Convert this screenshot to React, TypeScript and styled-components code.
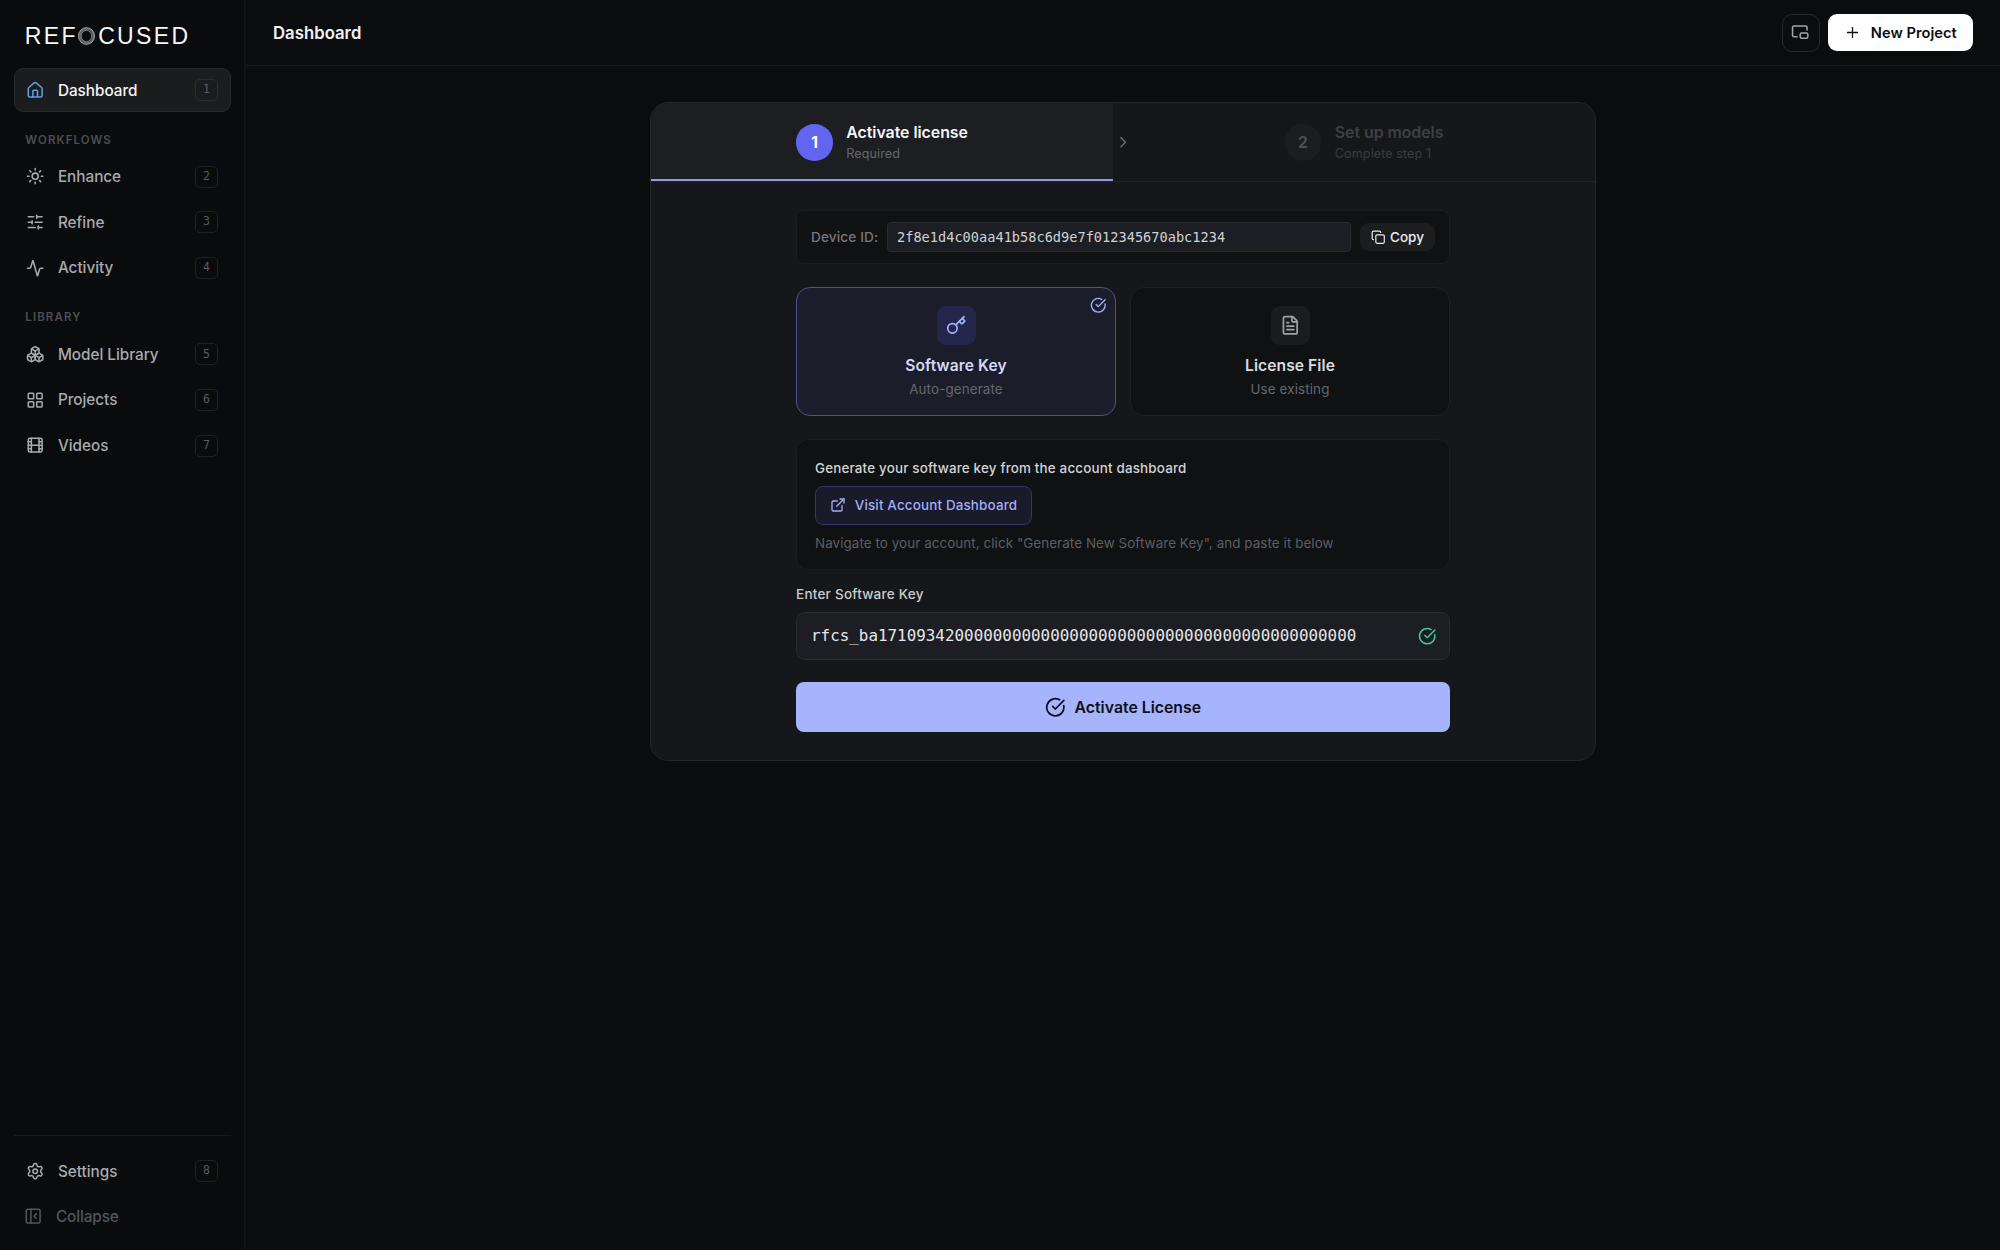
import React from "react";
import styled, { createGlobalStyle, css } from "styled-components";
import {
  House, Sun, SlidersHorizontal, Activity, Boxes, LayoutGrid, Film, Settings,
  PanelLeftClose, PictureInPicture2, Plus, ChevronRight, Copy, CircleCheckBig,
  Key, FileText, ExternalLink,
} from "lucide-react";

const Global = createGlobalStyle`
  *, *::before, *::after { box-sizing: border-box; }
  body { margin: 0; background: #0b0c0e; color: #fff; font-family: Inter, "Liberation Sans", sans-serif; -webkit-font-smoothing: antialiased; }
  button, input { font: inherit; color: inherit; letter-spacing: inherit; }
  svg { display: block; flex: none; }
`;

const Page = styled.div`
  display: flex;
  width: 100%;
  height: 1250px;
  overflow: hidden;
`;

/* Sidebar */
const Sidebar = styled.aside`
  display: flex;
  flex-direction: column;
  width: 246px;
  flex: none;
  padding: 0 13.5px 0 14px;
  background: #0a0b0d;
  border-right: 2px solid #131417;
`;
const Brand = styled.div`
  display: flex;
  align-items: center;
  height: 68px;
  padding: 3px 0 0 10.8px;
  font: 400 23px/24px "Liberation Sans", Arial, sans-serif;
  color: #f7f7f8;
`;
const BrandPart = styled.span`
  letter-spacing: 2.35px;
`;
const Ring = styled.svg`
  width: 17px;
  height: 18px;
  margin: 0 3px 0 0.3px;
`;
const KeyHint = styled.kbd<{ $active?: boolean }>`
  display: grid;
  place-items: center;
  width: 23px;
  height: 22px;
  padding-left: 1px;
  border: 1px solid ${(p) => (p.$active ? "#2b2c2f" : "#202124")};
  border-radius: 5px;
  color: #5a5b5f;
  font: 400 11.5px/1 "DejaVu Sans Mono", monospace;
`;
const NavItem = styled.a<{ $active?: boolean }>`
  display: flex;
  align-items: center;
  height: 44px;
  margin-bottom: 1.6px;
  padding: 0 12px 0 11px;
  border: 1px solid ${(p) => (p.$active ? "#28292c" : "transparent")};
  border-radius: 9px;
  background: ${(p) => (p.$active ? "#1b1c1e" : "transparent")};
  color: ${(p) => (p.$active ? "#f5f5f6" : "#a9aaad")};
  font-size: 15.3px;
  font-weight: 500;
  letter-spacing: -0.02px;
  svg { color: ${(p) => (p.$active ? "#5e9fe6" : "inherit")}; }
`;
const NavLabel = styled.span`
  flex: 1;
  padding-left: 13.5px;
`;
const SectionTitle = styled.h2`
  margin: 0;
  padding: 0 11.3px;
  height: 41px;
  line-height: 52.5px;
  font-size: 11.5px;
  font-weight: 600;
  letter-spacing: 1.1px;
  color: #4d4e52;
`;
const SidebarFooter = styled.div`
  margin-top: auto;
  height: 115px;
  padding-top: 13px;
  border-top: 1px solid #191a1d;
`;
const CollapseButton = styled.button`
  display: flex;
  align-items: center;
  gap: 13.2px;
  height: 43px;
  padding: 0 10.3px;
  border: 0;
  background: none;
  color: #55565a;
  font-size: 15.3px;
  font-weight: 500;
  letter-spacing: -0.08px;
`;

/* Main column */
const Main = styled.div`
  display: flex;
  flex: 1;
  flex-direction: column;
  min-width: 0;
`;
const TopBar = styled.header`
  display: flex;
  align-items: center;
  gap: 8.5px;
  height: 66px;
  padding: 0 27px;
  border-bottom: 1px solid #1b1c1f;
`;
const PageTitle = styled.h1`
  flex: 1;
  margin: 0;
  padding-top: 1px;
  font-size: 16.7px;
  font-weight: 600;
  letter-spacing: 0.04px;
  color: #f3f3f5;
`;
const IconButton = styled.button`
  display: grid;
  place-items: center;
  width: 38px;
  height: 38px;
  padding: 0;
  border: 1px solid #26272a;
  border-radius: 10px;
  background: #0c0d0f;
  color: #a3a4a7;
`;
const NewProjectButton = styled.button`
  display: flex;
  align-items: center;
  justify-content: center;
  gap: 9.5px;
  width: 145px;
  height: 37px;
  padding: 0;
  border: 0;
  border-radius: 9px;
  background: #fff;
  color: #0d0e14;
  font-size: 14.7px;
  font-weight: 600;
`;
const Content = styled.main`
  display: flex;
  flex: 1;
  justify-content: center;
  align-items: flex-start;
  padding-top: 36px;
`;

/* Setup card */
const Card = styled.section`
  width: 946px;
  height: 659px;
  border: 1px solid #25262a;
  border-radius: 18px;
  background: #16171a;
  overflow: hidden;
`;
const Steps = styled.div`
  display: grid;
  grid-template-columns: 1fr 20px 1fr;
  height: 79px;
  border-bottom: 1px solid #222327;
  color: #66676b;
`;
const Step = styled.div<{ $active?: boolean }>`
  display: flex;
  align-items: center;
  justify-content: center;
  gap: 13.5px;
  padding-top: 1px;
  ${(p) => p.$active && css`
    background: #1c1e22;
    padding-top: 3px;
    border-bottom: 2px solid #8f99e6;
  `}
`;
const StepArrow = styled.div`
  display: grid;
  place-items: center;
  padding-top: 1px;
`;
const StepNumber = styled.span<{ $active?: boolean }>`
  display: grid;
  place-items: center;
  width: 36.7px;
  height: 36.7px;
  border-radius: 50%;
  background: ${(p) => (p.$active ? "#6265f0" : "#1c1d20")};
  color: ${(p) => (p.$active ? "#fff" : "#4d4e52")};
  font-size: 15.5px;
  font-weight: 700;
`;
const StepTitle = styled.div<{ $active?: boolean }>`
  font-size: 15.9px;
  line-height: 22px;
  font-weight: 600;
  letter-spacing: -0.05px;
  color: ${(p) => (p.$active ? "#f6f6f8" : "#3e3f43")};
`;
const StepNote = styled.div<{ $active?: boolean }>`
  font-size: 12.6px;
  line-height: 19px;
  letter-spacing: 0.08px;
  color: ${(p) => (p.$active ? "#66676b" : "#3b3c40")};
`;
const Body = styled.div`
  width: 654px;
  margin: 28px auto 0;
`;
const DeviceRow = styled.div`
  display: flex;
  align-items: center;
  height: 54px;
  padding: 0 14px;
  border: 1px solid #1d1e21;
  border-radius: 8px;
  background: #101113;
`;
const DeviceLabel = styled.span`
  width: 76px;
  flex: none;
  font-size: 13.6px;
  font-weight: 500;
  letter-spacing: 0.13px;
  color: #77787c;
`;
const DeviceValue = styled.code`
  display: flex;
  align-items: center;
  flex: 1;
  height: 30px;
  padding: 1px 9px 0;
  border: 1px solid #2a2b31;
  border-radius: 4px;
  background: #1d1e23;
  color: #d0d1d4;
  font: 400 13.63px/1 "DejaVu Sans Mono", monospace;
`;
const CopyButton = styled.button`
  display: flex;
  align-items: center;
  justify-content: center;
  gap: 4.5px;
  width: 75px;
  height: 27.5px;
  margin-left: 9px;
  padding: 0;
  border: 0;
  border-radius: 9px;
  background: #1c1d1f;
  color: #ececee;
  font-size: 13.5px;
  font-weight: 500;
`;
const Methods = styled.div`
  display: grid;
  grid-template-columns: 1fr 1fr;
  gap: 14px;
  margin-top: 23px;
`;
const Method = styled.div<{ $selected?: boolean }>`
  position: relative;
  display: flex;
  flex-direction: column;
  align-items: center;
  height: 129px;
  padding-top: 18px;
  border: 1px solid ${(p) => (p.$selected ? "#53518f" : "#1f2023")};
  border-radius: 14px;
  background: ${(p) => (p.$selected ? "#1b1d2b" : "#101113")};
`;
const MethodIcon = styled.div<{ $selected?: boolean }>`
  display: grid;
  place-items: center;
  width: 39px;
  height: 39px;
  border-radius: 9px;
  background: ${(p) => (p.$selected ? "#24264b" : "#1b1c1e")};
  color: ${(p) => (p.$selected ? "#a5b0f8" : "#a0a1a4")};
`;
const MethodTitle = styled.div<{ $selected?: boolean }>`
  margin-top: 9px;
  font-size: 15.6px;
  line-height: 24px;
  font-weight: 600;
  letter-spacing: 0.08px;
  color: ${(p) => (p.$selected ? "#d5d9fb" : "#dadbdd")};
`;
const MethodNote = styled.div`
  font-size: 13.4px;
  line-height: 22px;
  letter-spacing: 0.13px;
  color: #66676c;
`;
const SelectedMark = styled.span`
  position: absolute;
  top: 9px;
  right: 9px;
  color: #a5b0f8;
`;
const HelpBox = styled.div`
  height: 131px;
  margin-top: 23px;
  padding: 17px 18px 0;
  border: 1px solid #1d1e21;
  border-radius: 12px;
  background: #101113;
`;
const HelpTitle = styled.div`
  font-size: 13.4px;
  line-height: 23px;
  font-weight: 500;
  letter-spacing: 0.18px;
  color: #d3d4d6;
`;
const VisitButton = styled.button`
  display: flex;
  align-items: center;
  justify-content: center;
  gap: 9px;
  width: 217px;
  height: 38.5px;
  margin: 6px 0;
  padding: 0;
  border: 1px solid #35346b;
  border-radius: 8px;
  background: #191a2a;
  color: #a5aef5;
  font-size: 13.4px;
  font-weight: 500;
  letter-spacing: 0.17px;
`;
const HelpNote = styled.div`
  font-size: 13.4px;
  line-height: 24px;
  letter-spacing: 0.08px;
  white-space: nowrap;
  color: #5e5f63;
`;
const FieldLabel = styled.div`
  margin-top: 13px;
  height: 29px;
  font-size: 13.5px;
  line-height: 23px;
  font-weight: 500;
  letter-spacing: 0.24px;
  color: #cbccce;
`;
const KeyField = styled.div`
  display: flex;
  align-items: center;
  justify-content: space-between;
  height: 48px;
  padding: 0 12.5px 0 14px;
  border: 1px solid #2b2c31;
  border-radius: 9px;
  background: #1d1e23;
  color: #e6e7ea;
  font: 400 15.9px/1 "DejaVu Sans Mono", monospace;
  svg { color: #3fcb95; }
`;
const ActivateButton = styled.button`
  display: flex;
  align-items: center;
  justify-content: center;
  gap: 9px;
  width: 100%;
  height: 50px;
  margin-top: 22px;
  padding: 0;
  border: 0;
  border-radius: 8px;
  background: #a5b4fc;
  color: #0d0f18;
  font-size: 15.8px;
  font-weight: 600;
`;

const workflows = [
  { icon: Sun, label: "Enhance", hint: "2" },
  { icon: SlidersHorizontal, label: "Refine", hint: "3" },
  { icon: Activity, label: "Activity", hint: "4" },
];
const library = [
  { icon: Boxes, label: "Model Library", hint: "5" },
  { icon: LayoutGrid, label: "Projects", hint: "6" },
  { icon: Film, label: "Videos", hint: "7" },
];

type NavProps = { icon: React.ElementType; label: string; hint: string; active?: boolean };
const Nav = ({ icon: Icon, label, hint, active }: NavProps) => (
  <NavItem $active={active}>
    <Icon size={18.4} strokeWidth={2} />
    <NavLabel>{label}</NavLabel>
    <KeyHint $active={active}>{hint}</KeyHint>
  </NavItem>
);

export default function App() {
  return (
    <Page>
      <Global />
      <Sidebar>
        <Brand>
          <BrandPart>REF</BrandPart>
          <Ring viewBox="0 0 17 18" fill="none">
            <ellipse cx="8.5" cy="9" rx="6.6" ry="6.9" stroke="#4a4b4f" strokeWidth="3" />
            <ellipse cx="8.5" cy="9" rx="8" ry="8.3" stroke="#c4c5c8" strokeWidth="0.8" />
            <ellipse cx="8.8" cy="8.8" rx="6.6" ry="7.2" stroke="#8d8e91" strokeWidth="0.6" />
            <ellipse cx="8.4" cy="9" rx="5.2" ry="5.6" stroke="#9a9b9e" strokeWidth="0.6" />
          </Ring>
          <BrandPart>CUSED</BrandPart>
        </Brand>
        <Nav icon={House} label="Dashboard" hint="1" active />
        <SectionTitle>WORKFLOWS</SectionTitle>
        {workflows.map((n) => <Nav key={n.hint} {...n} />)}
        <SectionTitle>LIBRARY</SectionTitle>
        {library.map((n) => <Nav key={n.hint} {...n} />)}
        <SidebarFooter>
          <Nav icon={Settings} label="Settings" hint="8" />
          <CollapseButton>
            <PanelLeftClose size={18.4} />
            Collapse
          </CollapseButton>
        </SidebarFooter>
      </Sidebar>
      <Main>
        <TopBar>
          <PageTitle>Dashboard</PageTitle>
          <IconButton><PictureInPicture2 size={18.4} /></IconButton>
          <NewProjectButton><Plus size={17} strokeWidth={1.8} />New Project</NewProjectButton>
        </TopBar>
        <Content>
          <Card>
            <Steps>
              <Step $active>
                <StepNumber $active>1</StepNumber>
                <div>
                  <StepTitle $active>Activate license</StepTitle>
                  <StepNote $active>Required</StepNote>
                </div>
              </Step>
              <StepArrow><ChevronRight size={18.4} /></StepArrow>
              <Step>
                <StepNumber>2</StepNumber>
                <div>
                  <StepTitle>Set up models</StepTitle>
                  <StepNote>Complete step 1</StepNote>
                </div>
              </Step>
            </Steps>
            <Body>
              <DeviceRow>
                <DeviceLabel>Device ID:</DeviceLabel>
                <DeviceValue>2f8e1d4c00aa41b58c6d9e7f012345670abc1234</DeviceValue>
                <CopyButton><Copy size={14.5} />Copy</CopyButton>
              </DeviceRow>
              <Methods>
                <Method $selected>
                  <SelectedMark><CircleCheckBig size={16.5} /></SelectedMark>
                  <MethodIcon $selected><Key size={20.6} /></MethodIcon>
                  <MethodTitle $selected>Software Key</MethodTitle>
                  <MethodNote>Auto-generate</MethodNote>
                </Method>
                <Method>
                  <MethodIcon><FileText size={20.6} /></MethodIcon>
                  <MethodTitle>License File</MethodTitle>
                  <MethodNote>Use existing</MethodNote>
                </Method>
              </Methods>
              <HelpBox>
                <HelpTitle>Generate your software key from the account dashboard</HelpTitle>
                <VisitButton><ExternalLink size={16} />Visit Account Dashboard</VisitButton>
                <HelpNote>Navigate to your account, click "Generate New Software Key", and paste it below</HelpNote>
              </HelpBox>
              <FieldLabel>Enter Software Key</FieldLabel>
              <KeyField>
                rfcs_ba17109342000000000000000000000000000000000000000000
                <CircleCheckBig size={18.4} />
              </KeyField>
              <ActivateButton><CircleCheckBig size={20.6} />Activate License</ActivateButton>
            </Body>
          </Card>
        </Content>
      </Main>
    </Page>
  );
}
